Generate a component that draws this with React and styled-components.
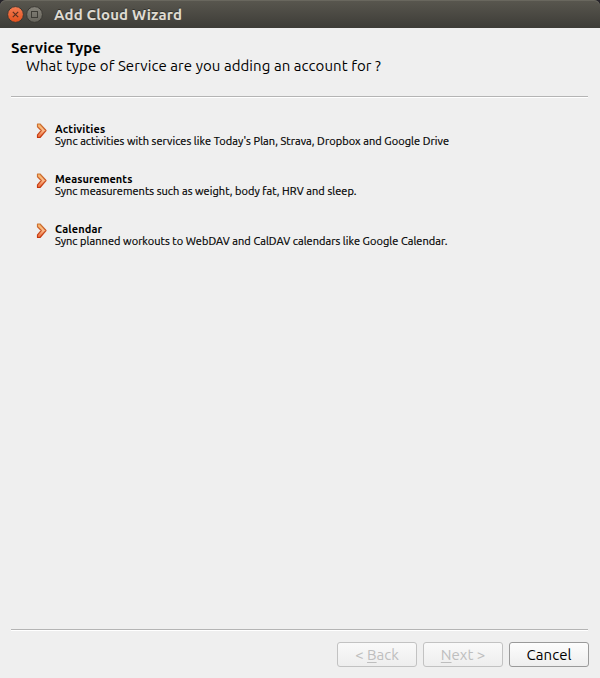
import React from "react";
import styled, { createGlobalStyle } from "styled-components";

const GlobalStyle = createGlobalStyle`
  * { box-sizing: border-box; }
  body { margin: 0; background: #efefef; }
`;

const Window = styled.main`
  width: 600px;
  height: 678px;
  display: flex;
  flex-direction: column;
  background: #efefef;
  color: #000;
  font-family: Ubuntu, "Noto Sans", sans-serif;
  white-space: nowrap;
`;

const TitleCorner = styled.div`
  background: #26242a;
`;

const TitleBar = styled.header`
  height: 28px;
  padding-left: 7px;
  display: flex;
  align-items: center;
  gap: 3px;
  border-radius: 6px 6px 0 0;
  background: linear-gradient(#59574f, #3d3c37);
  box-shadow: inset 0 1px #69675e;
`;

const WindowTitle = styled.h1`
  margin: 1px 0 0 8px;
  font-size: 15px;
  font-weight: 700;
  line-height: 20px;
  letter-spacing: ${(p) => p.$tracking}px;
  color: #dfdbd2;
  text-shadow: 0 -1px #33322e;
`;

const ControlIcon = styled.svg`
  display: block;
  width: 17px;
  height: 17px;
  margin-top: 1px;

  & + & { margin-left: -1px; }
`;

const Intro = styled.section`
  height: 68px;
  padding: 11px 11px 0;
`;

const IntroTitle = styled.h2`
  margin: 0;
  font-size: 15px;
  line-height: 18px;
  font-weight: 700;
  letter-spacing: ${(p) => p.$tracking}px;
`;

const IntroText = styled.p`
  margin: 0 0 0 15px;
  font-size: 15px;
  line-height: 18px;
  letter-spacing: ${(p) => p.$tracking}px;
`;

const Rule = styled.hr`
  width: 577px;
  height: 2px;
  margin: 0 0 0 11px;
  border: 0;
  flex: none;
  background: linear-gradient(#b4b4b4 50%, #fff 50%);
`;

const Choices = styled.nav`
  flex: 1;
  padding: 25px 0 0 36px;
`;

const Choice = styled.button`
  height: 50px;
  padding: 0;
  border: 0;
  background: none;
  color: inherit;
  font-family: inherit;
  text-align: left;
  display: flex;
  align-items: flex-start;
  gap: 8px;
`;

const Arrow = styled.svg`
  display: block;
  width: 11px;
  height: 16px;
`;

const ChoiceTitle = styled.div`
  font-size: 11px;
  line-height: 12px;
  font-weight: 700;
  letter-spacing: ${(p) => p.$tracking}px;
`;

const ChoiceText = styled.div`
  font-size: 11px;
  line-height: 12px;
  letter-spacing: ${(p) => p.$tracking}px;
  -webkit-text-stroke: 0.2px currentColor;
`;

const Footer = styled.footer`
  height: 47px;
  padding: 11px 11px 0 0;
  display: flex;
  justify-content: flex-end;
  gap: 6px;
`;

const PushButton = styled.button`
  width: 80px;
  height: 25px;
  padding: 0;
  border: 1px solid #9a9a9a;
  border-radius: 3px;
  background: linear-gradient(#fdfdfd, #eeeeee);
  color: #000;
  font-family: inherit;
  font-size: 15px;
  line-height: 23px;
  letter-spacing: ${(p) => p.$tracking}px;

  &:disabled {
    border-color: #c2c2c2;
    background: linear-gradient(#f9f9f9, #eeeeee);
    color: #bebebe;
  }
`;

const Mnemonic = styled.span`
  text-decoration: underline;
  text-decoration-thickness: 1px;
  text-underline-offset: 2px;
`;

const choices = [
  { title: "Activities", text: "Sync activities with services like Today's Plan, Strava, Dropbox and Google Drive", titleTracking: 0.14, tracking: 0.06 },
  { title: "Measurements", text: "Sync measurements such as weight, body fat, HRV and sleep.", titleTracking: 0.06, tracking: 0.05 },
  { title: "Calendar", text: "Sync planned workouts to WebDAV and CalDAV calendars like Google Calendar.", titleTracking: 0.1, tracking: 0.05 },
];

function CloseControl() {
  return (
    <ControlIcon viewBox="0 0 17 17" aria-label="Close">
      <defs>
        <linearGradient id="close" x2="0" y2="1">
          <stop stopColor="#f47d53" />
          <stop offset="1" stopColor="#e2501c" />
        </linearGradient>
      </defs>
      <circle cx="8.5" cy="8.5" r="7.9" fill="url(#close)" stroke="#3a3833" strokeWidth="1" />
      <path d="M5.8 5.8l5.4 5.4M11.2 5.8l-5.4 5.4" stroke="#5a3020" strokeWidth="1.2" />
    </ControlIcon>
  );
}

function MaximizeControl() {
  return (
    <ControlIcon viewBox="0 0 17 17" aria-label="Maximize">
      <defs>
        <linearGradient id="maximize" x2="0" y2="1">
          <stop stopColor="#85837a" />
          <stop offset="1" stopColor="#66645c" />
        </linearGradient>
      </defs>
      <circle cx="8.5" cy="8.5" r="7.9" fill="url(#maximize)" stroke="#3a3833" strokeWidth="1" />
      <rect x="5.5" y="5.5" width="6" height="6" fill="none" stroke="#3d3c36" />
    </ControlIcon>
  );
}

function CommandArrow() {
  return (
    <Arrow viewBox="0 0 11 16" aria-hidden="true">
      <defs>
        <linearGradient id="arrow" x2="0" y2="1">
          <stop stopColor="#f7b766" />
          <stop offset=".5" stopColor="#f9b98a" />
          <stop offset="1" stopColor="#ec5f2c" />
        </linearGradient>
        <linearGradient id="arrowEdge" x2="0" y2="1">
          <stop stopColor="#cc7434" />
          <stop offset=".6" stopColor="#cb4e20" />
          <stop offset="1" stopColor="#c4350e" />
        </linearGradient>
      </defs>
      <path
        d="M1.5 1L4 1L10 7.5L4 14.5L1.5 14.5L1.5 11.8L5.3 7.5L1.5 3.8Z"
        fill="url(#arrow)"
        stroke="url(#arrowEdge)"
        strokeWidth="1.2"
        strokeLinejoin="round"
      />
    </Arrow>
  );
}

export default function App() {
  return (
    <Window>
      <GlobalStyle />
      <TitleCorner>
        <TitleBar>
          <CloseControl />
          <MaximizeControl />
          <WindowTitle $tracking={0.15}>Add Cloud Wizard</WindowTitle>
        </TitleBar>
      </TitleCorner>
      <Intro>
        <IntroTitle $tracking={0.1}>Service Type</IntroTitle>
        <IntroText $tracking={0.07}>What type of Service are you adding an account for ?</IntroText>
      </Intro>
      <Rule />
      <Choices>
        {choices.map((c) => (
          <Choice key={c.title}>
            <CommandArrow />
            <div>
              <ChoiceTitle $tracking={c.titleTracking}>{c.title}</ChoiceTitle>
              <ChoiceText $tracking={c.tracking}>{c.text}</ChoiceText>
            </div>
          </Choice>
        ))}
      </Choices>
      <Rule />
      <Footer>
        <PushButton disabled $tracking={0}>&lt; <Mnemonic>B</Mnemonic>ack</PushButton>
        <PushButton disabled $tracking={0}><Mnemonic>N</Mnemonic>ext &gt;</PushButton>
        <PushButton $tracking={0.1}>Cancel</PushButton>
      </Footer>
    </Window>
  );
}
